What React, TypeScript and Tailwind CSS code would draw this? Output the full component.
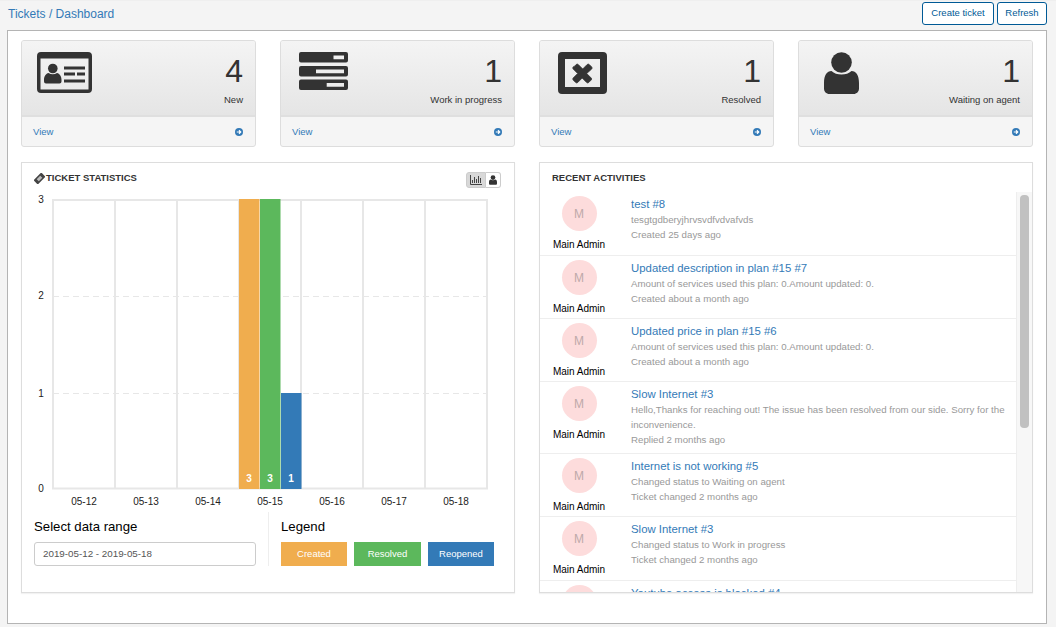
import React from "react";

const Dark = "#333333";

function CardIcon() {
  return (
    <svg width="55" height="41" viewBox="0 0 55 41">
      <path fillRule="evenodd" fill={Dark} d="M4 0H51a4 4 0 0 1 4 4V37a4 4 0 0 1-4 4H4a4 4 0 0 1-4-4V4a4 4 0 0 1 4-4ZM3.500 6.500V37.500H51.500V6.500Z" />
      <circle cx="15.800" cy="16.500" r="4.800" fill={Dark} />
      <path fill={Dark} d="M7 28c0-4 2-6.500 4.500-7 2.500 1.600 6 1.600 8.500 0 2.500.5 4.500 3 4.500 7v1.500a2 2 0 0 1-2 2H9a2 2 0 0 1-2-2Z" />
      <path fill={Dark} d="M27 14.500H48V17.500H27ZM27 20.500H38V23.500H27ZM40 20.500H48V23.500H40ZM27 27.500H48V30.500H27Z" />
    </svg>
  );
}
function TasksIcon() {
  return (
    <svg width="49" height="38" viewBox="0 0 49 38">
      <path fillRule="evenodd" fill={Dark} d="M2 0H47a2 2 0 0 1 2 2V8.500a2 2 0 0 1-2 2H2a2 2 0 0 1-2-2V2a2 2 0 0 1 2-2ZM34.500 3.500V7.200H45V3.500Z" />
      <path fillRule="evenodd" fill={Dark} d="M2 14H47a2 2 0 0 1 2 2V22.500a2 2 0 0 1-2 2H2a2 2 0 0 1-2-2V16a2 2 0 0 1 2-2ZM17 17.500V21.200H45V17.500Z" />
      <path fillRule="evenodd" fill={Dark} d="M2 27.500H47a2 2 0 0 1 2 2V36a2 2 0 0 1-2 2H2a2 2 0 0 1-2-2V29.500a2 2 0 0 1 2-2ZM27.700 31V34.700H45V31Z" />
    </svg>
  );
}
function CloseIcon() {
  return (
    <svg width="49" height="42" viewBox="0 0 49 42">
      <path fillRule="evenodd" fill={Dark} d="M4 0H45a4 4 0 0 1 4 4V38a4 4 0 0 1-4 4H4a4 4 0 0 1-4-4V4a4 4 0 0 1 4-4ZM7 7V35H42V7Z" />
      <g transform="translate(0.200 2)">
        <path fill={Dark} stroke={Dark} strokeWidth="0.800" strokeLinejoin="round" d="M16 12.500l2-2a1.500 1.500 0 0 1 2 0l4.500 4.500 4.500-4.500a1.500 1.500 0 0 1 2 0l2.500 2.500a1.500 1.500 0 0 1 0 2L28.500 19.500l4.500 4.500a1.500 1.500 0 0 1 0 2l-2.500 2.500a1.500 1.500 0 0 1-2 0L24 24l-4.500 4.500a1.500 1.500 0 0 1-2 0L15 26a1.500 1.500 0 0 1 0-2l4.500-4.500L15 15a1.500 1.500 0 0 1 1-2.500Z" />
      </g>
    </svg>
  );
}
function UserIcon({ size = 35, h = 42 }: { size?: number; h?: number }) {
  return (
    <svg width={size} height={h} viewBox="0 0 35 42">
      <circle cx="17.500" cy="10.500" r="10.300" fill={Dark} />
      <path fill={Dark} d="M7.500 19c2.500 2.400 6 3.500 10 3.500s7.500-1.100 10-3.500c4.500.2 7.500 4 7.500 12v5.500c0 3-2.200 5.500-5.500 5.500H5.500C2.200 42 0 39.500 0 36.500V31c0-8 3-11.800 7.500-12Z" />
    </svg>
  );
}
function ArrowCircle() {
  return (
    <svg width="8" height="8" viewBox="0 0 16 16">
      <circle cx="8" cy="8" r="8" fill="#337ab7" />
      <path d="M3.500 8H11M8 4.500L11.500 8 8 11.500" stroke="#fff" strokeWidth="2.400" fill="none" />
    </svg>
  );
}

const cards = [
  { icon: <CardIcon />, pad: "pl-[15px]", n: "4", label: "New" },
  { icon: <TasksIcon />, pad: "pl-[18px]", n: "1", label: "Work in progress" },
  { icon: <CloseIcon />, pad: "pl-[18px]", n: "1", label: "Resolved" },
  { icon: <UserIcon />, pad: "pl-[25px]", n: "1", label: "Waiting on agent" },
];

const rows = [
  { t: "test #8", d: ["tesgtgdberyjhrvsvdfvdvafvds"], f: "Created 25 days ago", extra: true },
  { t: "Updated description in plan #15 #7", d: ["Amount of services used this plan: 0.Amount updated: 0."], f: "Created about a month ago" },
  { t: "Updated price in plan #15 #6", d: ["Amount of services used this plan: 0.Amount updated: 0."], f: "Created about a month ago" },
  { t: "Slow Internet #3", d: ["Hello,Thanks for reaching out! The issue has been resolved from our side. Sorry for the", "inconvenience."], f: "Replied 2 months ago" },
  { t: "Internet is not working #5", d: ["Changed status to Waiting on agent"], f: "Ticket changed 2 months ago" },
  { t: "Slow Internet #3", d: ["Changed status to Work in progress"], f: "Ticket changed 2 months ago", extra: true },
];

function Chart() {
  const xs = [53, 115, 177, 239, 301, 363, 425, 487];
  const labels = ["05-12", "05-13", "05-14", "05-15", "05-16", "05-17", "05-18"];
  return (
    <svg width="492" height="318" viewBox="22 192 492 318" className="block" fontFamily="'Liberation Sans', Arial, sans-serif">
      {[296, 393].map((y) => (
        <line key={y} x1="53" x2="487" y1={y + 0.5} y2={y + 0.5} stroke="#e7e7e7" strokeDasharray="6 4" />
      ))}
      {xs.map((x) => (
        <line key={x} x1={x} x2={x} y1="199" y2="489" stroke="#e7e7e7" strokeWidth="2" />
      ))}
      <line x1="52" x2="488" y1="200" y2="200" stroke="#e7e7e7" strokeWidth="2" />
      <line x1="52" x2="488" y1="488.500" y2="488.500" stroke="#e7e7e7" strokeWidth="2" />
      <rect x="239" y="199" width="20.500" height="290" fill="#f0ad4e" />
      <rect x="260" y="199" width="20.500" height="290" fill="#5cb85c" />
      <rect x="281" y="393" width="20.500" height="96" fill="#337ab7" />
      {[["3", 249], ["3", 270], ["1", 291]].map(([t, x], i) => (
        <text key={i} x={x as number} y="482" textAnchor="middle" fontSize="10" fontWeight="700" fill="#fff">{t}</text>
      ))}
      {[["3", 203], ["2", 299], ["1", 397], ["0", 492]].map(([t, y]) => (
        <text key={t as string} x="41" y={y as number} textAnchor="middle" fontSize="10" fill="#222">{t}</text>
      ))}
      {labels.map((t, i) => (
        <text key={t} x={84 + i * 62} y="505" textAnchor="middle" fontSize="10" fill="#222">{t}</text>
      ))}
    </svg>
  );
}

function Avatar() {
  return <div className="w-[35px] h-[35px] shrink-0 rounded-full bg-[#fddcdc] flex items-center justify-center text-[12px] text-[#bda9a9]">M</div>;
}

export default function App() {
  return (
    <div className="w-[1056px] h-[627px] overflow-hidden bg-[#f4f4f4] text-[#333] font-['Liberation_Sans',Arial,sans-serif]">
      <div className="h-[30px] flex items-start justify-between pl-[8px] pr-[9px] pt-[1px] border-t border-[#efefef]">
        <div className="text-[12px] leading-[24px] text-[#337ab7]">Tickets / Dashboard</div>
        <div className="flex gap-[3px]">
          <button className="h-[23px] w-[72px] rounded-[3px] border border-[#005a96] bg-white text-[9.500px] text-[#005a96]">Create ticket</button>
          <button className="h-[23px] w-[50px] rounded-[3px] border border-[#005a96] bg-white text-[9.500px] text-[#005a96]">Refresh</button>
        </div>
      </div>
      <div className="ml-[7px] w-[1040px] h-[594px] border border-[#b4b4b4] bg-white px-[13px] pt-[9px]">
        <div className="grid grid-cols-4 gap-x-[24px]">
          {cards.map((c) => (
            <div key={c.label} className="h-[107px] rounded-[3px] border border-[#dddddd] bg-[#f5f5f5] overflow-hidden flex flex-col">
              <div className={`h-[76px] bg-gradient-to-b from-[#f4f4f4] to-[#e5e5e5] border-b-[2px] border-[#dfdfdf] flex justify-between pt-[11px] pr-[12px] ${c.pad}`}>
                <div>{c.icon}</div>
                <div className="text-right">
                  <div className="text-[32px] leading-[36px] mt-[1px] text-[#333]">{c.n}</div>
                  <div className="text-[9.500px] leading-[12px] mt-[5px] text-[#333]">{c.label}</div>
                </div>
              </div>
              <div className="flex-1 flex items-center justify-between pl-[11px] pr-[12px] pt-[1px] text-[9.500px] text-[#337ab7]">
                <span>View</span>
                <ArrowCircle />
              </div>
            </div>
          ))}
        </div>
        <div className="grid grid-cols-2 gap-x-[24px] mt-[15px]">
          <section className="h-[431px] border border-[#dddddd] shadow-[0_1px_1px_rgba(0,0,0,0.05)] bg-white">
            <div className="h-[29px] flex items-start justify-between pl-[12px] pr-[13px]">
              <div className="flex items-center gap-[1px] h-[29px] pt-[1px] text-[9.500px] font-bold text-[#333]">
                <svg width="11" height="11" viewBox="0 0 11 11">
                  <g transform="rotate(-45 5.500 5.500)">
                    <rect x="0" y="2.500" width="11" height="6" rx="0.800" fill="#444" />
                    <rect x="3" y="4" width="5" height="3" fill="#bbb" />
                  </g>
                </svg>
                <span>TICKET STATISTICS</span>
              </div>
              <div className="flex mt-[9px] h-[16px]">
                <div className="w-[20px] flex items-center justify-center bg-[#d8d8d8] border border-[#cccccc] rounded-l-[3px]">
                  <svg width="12" height="10" viewBox="0 0 12 10"><path d="M.5 0V9.500H12M2.500 8V5M4.500 8V2M6.500 8V4M8.500 8V1M10.500 8V3" stroke="#444" fill="none" /></svg>
                </div>
                <div className="w-[15px] flex items-center justify-center bg-white border border-l-0 border-[#cccccc] rounded-r-[3px]">
                  <UserIcon size={8} h={10} />
                </div>
              </div>
            </div>
            <Chart />
            <div className="flex mt-[2px]">
              <div className="w-[246px] pl-[12px] pr-[12px] pt-[6px]">
                <div className="text-[13.200px] leading-[18px] text-black">Select data range</div>
                <div className="mt-[6px] w-[222px] h-[24px] border border-[#cccccc] rounded-[3px] pl-[8px] flex items-center text-[9.800px] text-[#555]">2019-05-12 - 2019-05-18</div>
              </div>
              <div className="border-l border-[#eeeeee] pl-[12px] pt-[6px]">
                <div className="text-[13.200px] leading-[18px] text-black">Legend</div>
                <div className="flex gap-[7px] mt-[6px]">
                  <div className="w-[66px] h-[24px] flex items-center justify-center bg-[#f0ad4e] text-white text-[9.500px]">Created</div>
                  <div className="w-[67px] h-[24px] flex items-center justify-center bg-[#5cb85c] text-white text-[9.500px]">Resolved</div>
                  <div className="w-[66px] h-[24px] flex items-center justify-center bg-[#337ab7] text-white text-[9.500px]">Reopened</div>
                </div>
              </div>
            </div>
          </section>
          <section className="h-[431px] border border-[#dddddd] shadow-[0_1px_1px_rgba(0,0,0,0.05)] bg-white flex flex-col">
            <div className="h-[29px] shrink-0 pl-[12px] pt-[1px] flex items-center text-[9.500px] font-bold text-[#333]">RECENT ACTIVITIES</div>
            <div className="flex-1 min-h-0 flex">
              <div className="flex-1 min-w-0 overflow-hidden">
                {rows.map((r, i) => (
                  <div key={i} className={`flex gap-[13px] border-b border-[#eeeeee] pt-[4px] ${r.extra ? "pb-[4px]" : "pb-[3px]"}`}>
                    <div className="w-[78px] shrink-0 flex flex-col items-center">
                      <Avatar />
                      <div className="text-[10px] leading-[12px] mt-[8px] text-black">Main Admin</div>
                    </div>
                    <div className="min-w-0">
                      <div className="text-[11.400px] leading-[14px] mt-[1px] text-[#337ab7]">{r.t}</div>
                      <div className="text-[9.700px] leading-[15px] mt-[1px] text-[#999]">
                        {r.d.map((l) => <div key={l}>{l}</div>)}
                      </div>
                      <div className="text-[9.700px] leading-[12px] mt-[2px] mb-[4px] text-[#999]">{r.f}</div>
                    </div>
                  </div>
                ))}
                <div className="flex gap-[13px] pt-[4px]">
                  <div className="w-[78px] shrink-0 flex justify-center"><Avatar /></div>
                  <div className="text-[11.400px] leading-[14px] mt-[1px] text-[#337ab7]">Youtube access is blocked #4</div>
                </div>
              </div>
              <div className="w-[16px] shrink-0 bg-[#f7f7f7] border-l border-[#eeeeee] pt-[3px] pl-[3px]">
                <div className="w-[9px] h-[233px] rounded-[4px] bg-[#c1c1c1]" />
              </div>
            </div>
          </section>
        </div>
      </div>
    </div>
  );
}
